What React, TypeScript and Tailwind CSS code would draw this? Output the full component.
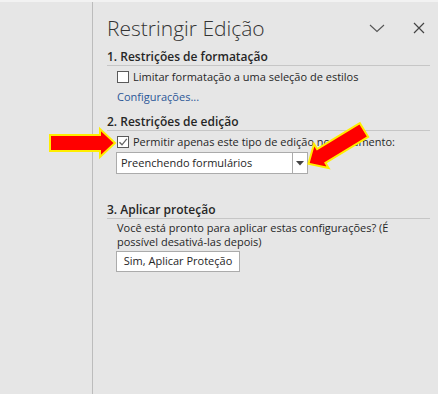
import React from 'react';

function SectionHeader({ label }: { label: string }) {
    return (
        <div className="border-b border-[#c6c6c6] text-[12px] font-semibold leading-[17px] text-[#262626]">
            {label}
        </div>
    );
}

function Checkbox({ checked }: { checked?: boolean }) {
    return (
        <div className="flex h-[12px] w-[12px] shrink-0 items-center justify-center border border-[#5a5a5a] bg-white">
            {checked && (
                <svg width="10" height="10" viewBox="0 0 10 10">
                    <path d="M1.5 5.2 L4 7.8 L8.8 1.8" fill="none" stroke="#666" strokeWidth="1.3" />
                </svg>
            )}
        </div>
    );
}

// red arrow with yellow edge, drawn pointing right from (0,0)
const arrowPoints = '0,-8 50,-8 50,-14 65,0 50,14 50,8 0,8';

export default function App() {
    return (
        <div className="relative flex h-[394px] w-[438px] overflow-hidden border-t-2 border-[#f2f2f2] bg-[#e6e6e6] font-['Open_Sans',sans-serif] text-[11px] text-[#262626]">
            <div className="w-[92px] shrink-0" />
            <div className="flex-1 border-l border-[#bcbcbc] pl-[14px] pr-[8px]">
                {/* title bar */}
                <div className="mt-[12px] flex items-center">
                    <div className="flex-1 text-[21px] font-light leading-[28px] text-[#333]">Restringir Edição</div>
                    <svg width="16" height="10" viewBox="0 0 16 10" className="mr-[28px]">
                        <path d="M1 2 L8 8.5 L15 2" fill="none" stroke="#555" strokeWidth="1.1" />
                    </svg>
                    <svg width="12" height="12" viewBox="0 0 12 12" className="mr-[5px]">
                        <path d="M1 1 L11 11 M11 1 L1 11" fill="none" stroke="#444" strokeWidth="1.2" />
                    </svg>
                </div>

                {/* 1 */}
                <div className="mt-[6px]">
                    <SectionHeader label="1. Restrições de formatação" />
                </div>
                <div className="mt-[3px] flex items-center gap-[4px] pl-[10px]">
                    <Checkbox />
                    <span className="leading-[16px]">Limitar formatação a uma seleção de estilos</span>
                </div>
                <div className="mt-[4px] pl-[10px] leading-[16px] text-[#2b5797]">Configurações...</div>

                {/* 2 */}
                <div className="mt-[8px]">
                    <SectionHeader label="2. Restrições de edição" />
                </div>
                <div className="mt-[3px] flex items-center gap-[4px] pl-[10px]">
                    <Checkbox checked />
                    <span className="leading-[16px]">Permitir apenas este tipo de edição no documento:</span>
                </div>
                <div className="ml-[9px] mt-[2px] flex h-[22px] w-[192px] border border-[#ababab] bg-white">
                    <div className="flex flex-1 items-center pl-[4px]">Preenchendo formulários</div>
                    <div className="flex w-[15px] items-center justify-center border-l border-[#ababab]">
                        <svg width="8" height="5" viewBox="0 0 8 5">
                            <path d="M0 0 H8 L4 4.5 Z" fill="#444" />
                        </svg>
                    </div>
                </div>

                {/* 3 */}
                <div className="mt-[27px]">
                    <SectionHeader label="3. Aplicar proteção" />
                </div>
                <div className="mt-[2px] pl-[10px] leading-[14px]">
                    Você está pronto para aplicar estas configurações? (É
                    <br />
                    possível desativá-las depois)
                </div>
                <button className="ml-[9px] mt-[2px] h-[21px] w-[124px] border border-[#ababab] bg-white text-[11px]">
                    Sim, Aplicar Proteção
                </button>
            </div>

            <svg className="pointer-events-none absolute left-0 top-0" width="438" height="394">
                <g transform="translate(50 141)">
                    <polygon points={arrowPoints} fill="#ff0000" stroke="#ffee00" strokeWidth="2" strokeLinejoin="miter" />
                </g>
                <g transform="translate(364 128) rotate(148.7)">
                    <polygon points={arrowPoints} fill="#ff0000" stroke="#ffee00" strokeWidth="2" strokeLinejoin="miter" />
                </g>
            </svg>
        </div>
    );
}
